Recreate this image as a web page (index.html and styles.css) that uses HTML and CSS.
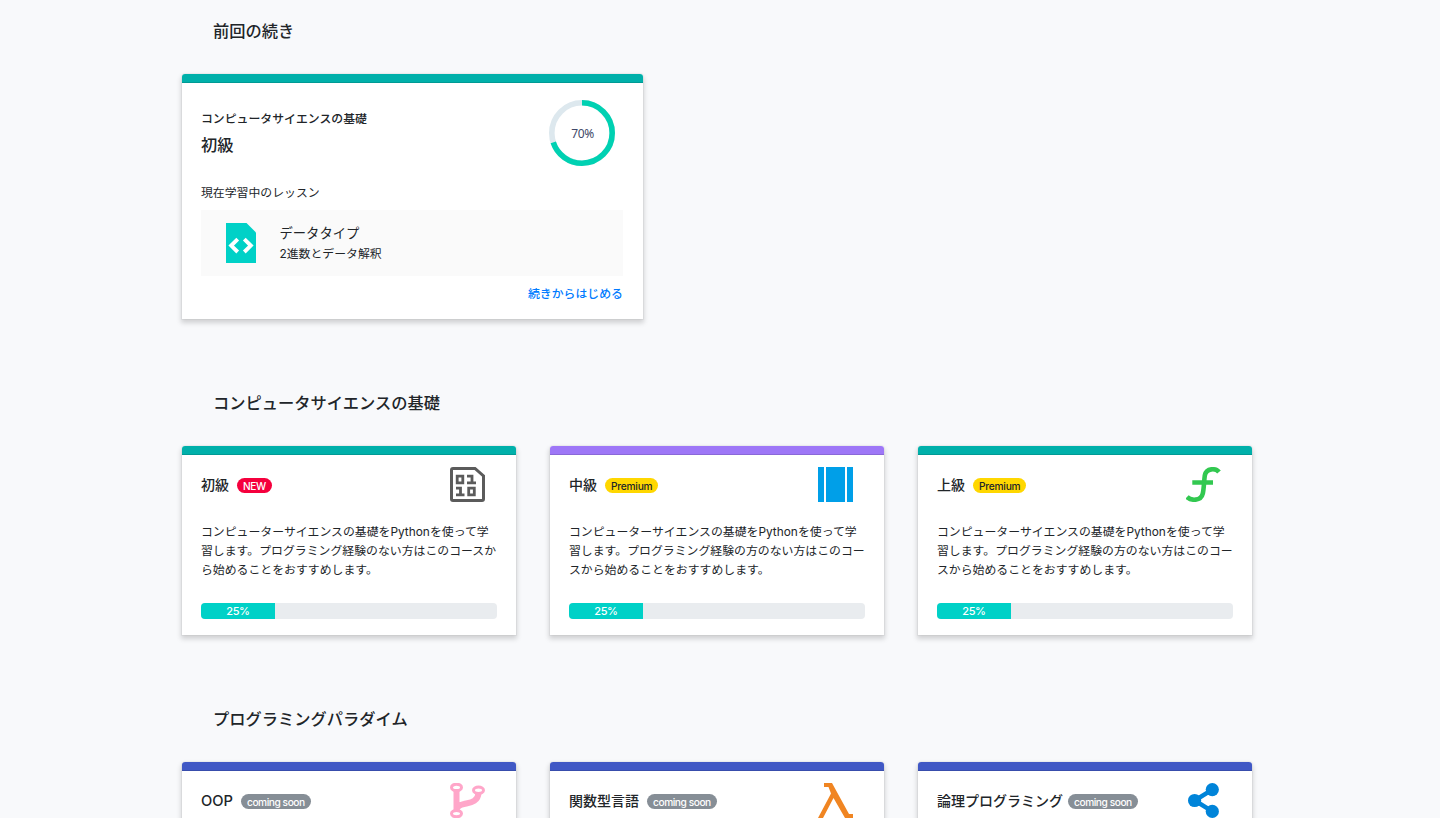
FILE: index.html
```html
<!DOCTYPE html>
<html lang="ja">
<head>
<meta charset="utf-8">
<title>コース一覧</title>
<link rel="stylesheet" href="styles.css">
</head>
<body>
<main class="container">
  <section class="section">
    <h2 class="section-title">前回の続き</h2>
    <article class="card card-resume">
      <div class="card-bar teal"></div>
      <div class="resume-body">
        <div class="resume-head">
          <div>
            <p class="resume-course">コンピュータサイエンスの基礎</p>
            <h3 class="resume-level">初級</h3>
          </div>
          <svg class="ring" viewBox="0 0 68 68">
            <circle cx="34" cy="34" r="30.2" fill="none" stroke="#dde8ee" stroke-width="5.6"/>
            <circle cx="34" cy="34" r="30.2" fill="none" stroke="#00d1b2" stroke-width="5.6" pathLength="100" stroke-dasharray="70 30" transform="rotate(-90 34 34)"/>
            <text class="ring-text" x="34.5" y="38.6" text-anchor="middle">70%</text>
          </svg>
        </div>
        <p class="resume-label">現在学習中のレッスン</p>
        <div class="lesson">
          <svg class="lesson-icon" viewBox="0 0 30 40">
            <path d="M0 0H20.5L30 9.5V40H0Z" fill="#00d1c7"/>
            <path d="M11.7 16.2L5.2 22.6L11.7 29M18.3 16.2L24.8 22.6L18.3 29" fill="none" stroke="#fff" stroke-width="3.9"/>
          </svg>
          <div>
            <p class="lesson-title">データタイプ</p>
            <p class="lesson-sub">2進数とデータ解釈</p>
          </div>
        </div>
        <a class="resume-link">続きからはじめる</a>
      </div>
    </article>
  </section>

  <section class="section">
    <h2 class="section-title">コンピュータサイエンスの基礎</h2>
    <div class="cards">
      <article class="card">
        <div class="card-bar teal"></div>
        <div class="card-body">
          <div class="card-head">
            <h3 class="card-title">初級</h3><span class="badge new">NEW</span>
            <svg class="icon" viewBox="0 0 35 35" fill="none" stroke="#5b5b5b">
              <path d="M3 1.5H25L33.5 9V32Q33.5 33.5 32 33.5H3Q1.5 33.5 1.5 32V3Q1.5 1.5 3 1.5Z" stroke-width="3"/>
              <path d="M7.2 9.2H12.8V15.8H7.2ZM17 9.2H22V16M17 15.8H26M6 21.2H10.5V28M6 27.8H14.5M18.7 21.2H24.3V27.8H18.7Z" stroke-width="2.8"/>
            </svg>
          </div>
          <p class="card-text">コンピューターサイエンスの基礎をPythonを使って学<br>習します。プログラミング経験のない方はこのコースか<br>ら始めることをおすすめします。</p>
          <div class="progress"><div class="progress-bar" style="width:25%">25%</div></div>
        </div>
      </article>
      <article class="card">
        <div class="card-bar purple"></div>
        <div class="card-body">
          <div class="card-head">
            <h3 class="card-title">中級</h3><span class="badge premium">Premium</span>
            <svg class="icon" viewBox="0 0 35 35" fill="#009fe8">
              <path d="M0 0H6V35H0ZM8 0H27V35H8ZM29 0H35V35H29Z"/>
            </svg>
          </div>
          <p class="card-text">コンピューターサイエンスの基礎をPythonを使って学<br>習します。プログラミング経験の方のない方はこのコー<br>スから始めることをおすすめします。</p>
          <div class="progress"><div class="progress-bar" style="width:25%">25%</div></div>
        </div>
      </article>
      <article class="card">
        <div class="card-bar teal"></div>
        <div class="card-body">
          <div class="card-head">
            <h3 class="card-title">上級</h3><span class="badge premium">Premium</span>
            <svg class="icon" viewBox="0 0 35 35" fill="none" stroke="#32c850" stroke-width="4.6">
              <path d="M33 5C30 1.2 20.4 .6 18.8 8.5C18 14 18 21 16.8 26.5C15 34.4 4.8 33.8 1 30M6.3 15.5H27"/>
            </svg>
          </div>
          <p class="card-text">コンピューターサイエンスの基礎をPythonを使って学<br>習します。プログラミング経験の方のない方はこのコー<br>スから始めることをおすすめします。</p>
          <div class="progress"><div class="progress-bar" style="width:25%">25%</div></div>
        </div>
      </article>
    </div>
  </section>

  <section class="section">
    <h2 class="section-title">プログラミングパラダイム</h2>
    <div class="cards">
      <article class="card">
        <div class="card-bar blue"></div>
        <div class="card-body">
          <div class="card-head">
            <h3 class="card-title latin">OOP</h3><span class="badge soon">coming soon</span>
            <svg class="icon" viewBox="0 0 35 35" fill="none" stroke="#ffa6c9">
              <path d="M6.5 8V28M28.5 10C28 19 20 19.5 14 21C9 22 7 24 6.5 27" stroke-width="6"/>
              <g fill="#fff" stroke-width="3"><ellipse cx="6.5" cy="4.4" rx="5" ry="3.2"/><ellipse cx="28.5" cy="7.2" rx="5" ry="3.2"/><ellipse cx="6.5" cy="30.6" rx="5" ry="3.2"/></g>
            </svg>
          </div>
        </div>
      </article>
      <article class="card">
        <div class="card-bar blue"></div>
        <div class="card-body">
          <div class="card-head">
            <h3 class="card-title">関数型言語</h3><span class="badge soon">coming soon</span>
            <svg class="icon" viewBox="0 0 35 35" fill="#f08522">
              <path d="M6 0H14L31 31H35V35H27L15.5 15L5 35H0L13 10.5L10.5 4H6Z"/>
            </svg>
          </div>
        </div>
      </article>
      <article class="card">
        <div class="card-bar blue"></div>
        <div class="card-body">
          <div class="card-head">
            <h3 class="card-title">論理プログラミング</h3><span class="badge soon tight">coming soon</span>
            <svg class="icon" viewBox="0 0 35 35" fill="#0084d9">
              <path d="M26.3 6.6L8.7 17.5L26.3 28.4" fill="none" stroke="#0084d9" stroke-width="4.5"/>
              <circle cx="26.3" cy="6.6" r="6.6"/><circle cx="8.6" cy="17.5" r="6.6"/><circle cx="26.3" cy="28.4" r="6.6"/>
            </svg>
          </div>
        </div>
      </article>
    </div>
  </section>
</main>
</body>
</html>
```
FILE: styles.css
```css
* { box-sizing: border-box; }
body {
  margin: 0;
  height: 818px;
  overflow: hidden;
  background: #f8f9fb;
  color: #212529;
  font-family: Inter, "Noto Sans CJK JP", sans-serif;
  font-size: 11.88px;
  font-weight: 400;
}
h2, h3, p { margin: 0; font-weight: 500; }
.container { width: 1072px; height: 818px; margin-left: 181px; }
.section { margin-bottom: 53px; }
.section:last-child { margin-bottom: 0; }
.section-title {
  height: 73px;
  padding: 19px 0 0 32px;
  font-size: 16.25px;
  line-height: 24px;
}
.section:not(:first-child) .section-title { height: 72px; padding-top: 18px; }
.cards { display: grid; grid-template-columns: repeat(3, 336px); gap: 32px; }
.card {
  height: 191px;
  background: #fff;
  border: 1px solid rgba(0, 0, 0, .03);
  border-radius: 4px 4px 0 0;
  background-clip: padding-box;
  box-shadow: 0 3px 5px rgba(0, 0, 0, .16);
}
.card-resume { width: 463px; height: 247px; }
.card-bar {
  height: 9px;
  border-bottom: 1px solid rgba(0, 0, 0, .125);
  border-radius: 3px 3px 0 0;
}
.teal { background: #00b0aa; }
.purple { background: #9e77f7; }
.blue { background: #4058c5; }

.resume-body { padding: 16px 20px 0 19px; }
.resume-head { display: flex; justify-content: space-between; height: 85px; }
.resume-course { margin-top: 11px; line-height: 18px; }
.resume-level { margin-top: 5px; font-size: 16.25px; line-height: 24px; }
.ring { width: 68px; height: 68px; margin-right: 7px; }
.ring-text { font-family: "Noto Sans", sans-serif; font-size: 12px; letter-spacing: -.4px; fill: #404868; }
.resume-label { line-height: 18px; font-weight: 400; }
.lesson {
  display: flex;
  align-items: center;
  height: 66px;
  margin-top: 8px;
  padding-left: 25px;
  gap: 23.5px;
  background: #fafafa;
}
.lesson-icon { width: 30px; height: 40px; }
.lesson-title { font-size: 13.3px; line-height: 20px; font-weight: 400; }
.lesson-sub { padding-top: 1px; line-height: 19px; font-weight: 400; }
.resume-link { display: block; margin-top: 9px; line-height: 18px; text-align: right; color: #007bff; font-weight: 500; }

.card-body { padding: 12px 19px 0; }
.card-head { display: flex; align-items: center; height: 35px; }
.card-title { font-size: 14px; line-height: 20px; }
.latin { font-size: 14.7px; }
.icon { width: 35px; height: 35px; margin: 0 12px 0 auto; }
.badge {
  height: 15px;
  margin: 2px 0 0 8px;
  padding: 0 6px;
  border-radius: 8px;
  font-size: 10.2px;
  letter-spacing: -.25px;
  line-height: 17px;
  font-weight: 500;
  white-space: nowrap;
}
.tight { margin-left: 5px; }
.new { background: #f5003d; color: #fff; letter-spacing: -.4px; }
.premium { background: #ffd700; color: #212529; }
.soon { background: #868e96; color: #fff; letter-spacing: -.45px; }
.card-text { margin-top: 20px; line-height: 19px; white-space: nowrap; font-weight: 400; }
.progress { height: 16px; margin-top: 24px; border-radius: 4px; background: #e9ecef; overflow: hidden; }
.progress-bar { height: 16px; background: #00d1c7; color: #fff; font-size: 11px; letter-spacing: -.4px; line-height: 17px; text-align: center; font-weight: 500; }
```
